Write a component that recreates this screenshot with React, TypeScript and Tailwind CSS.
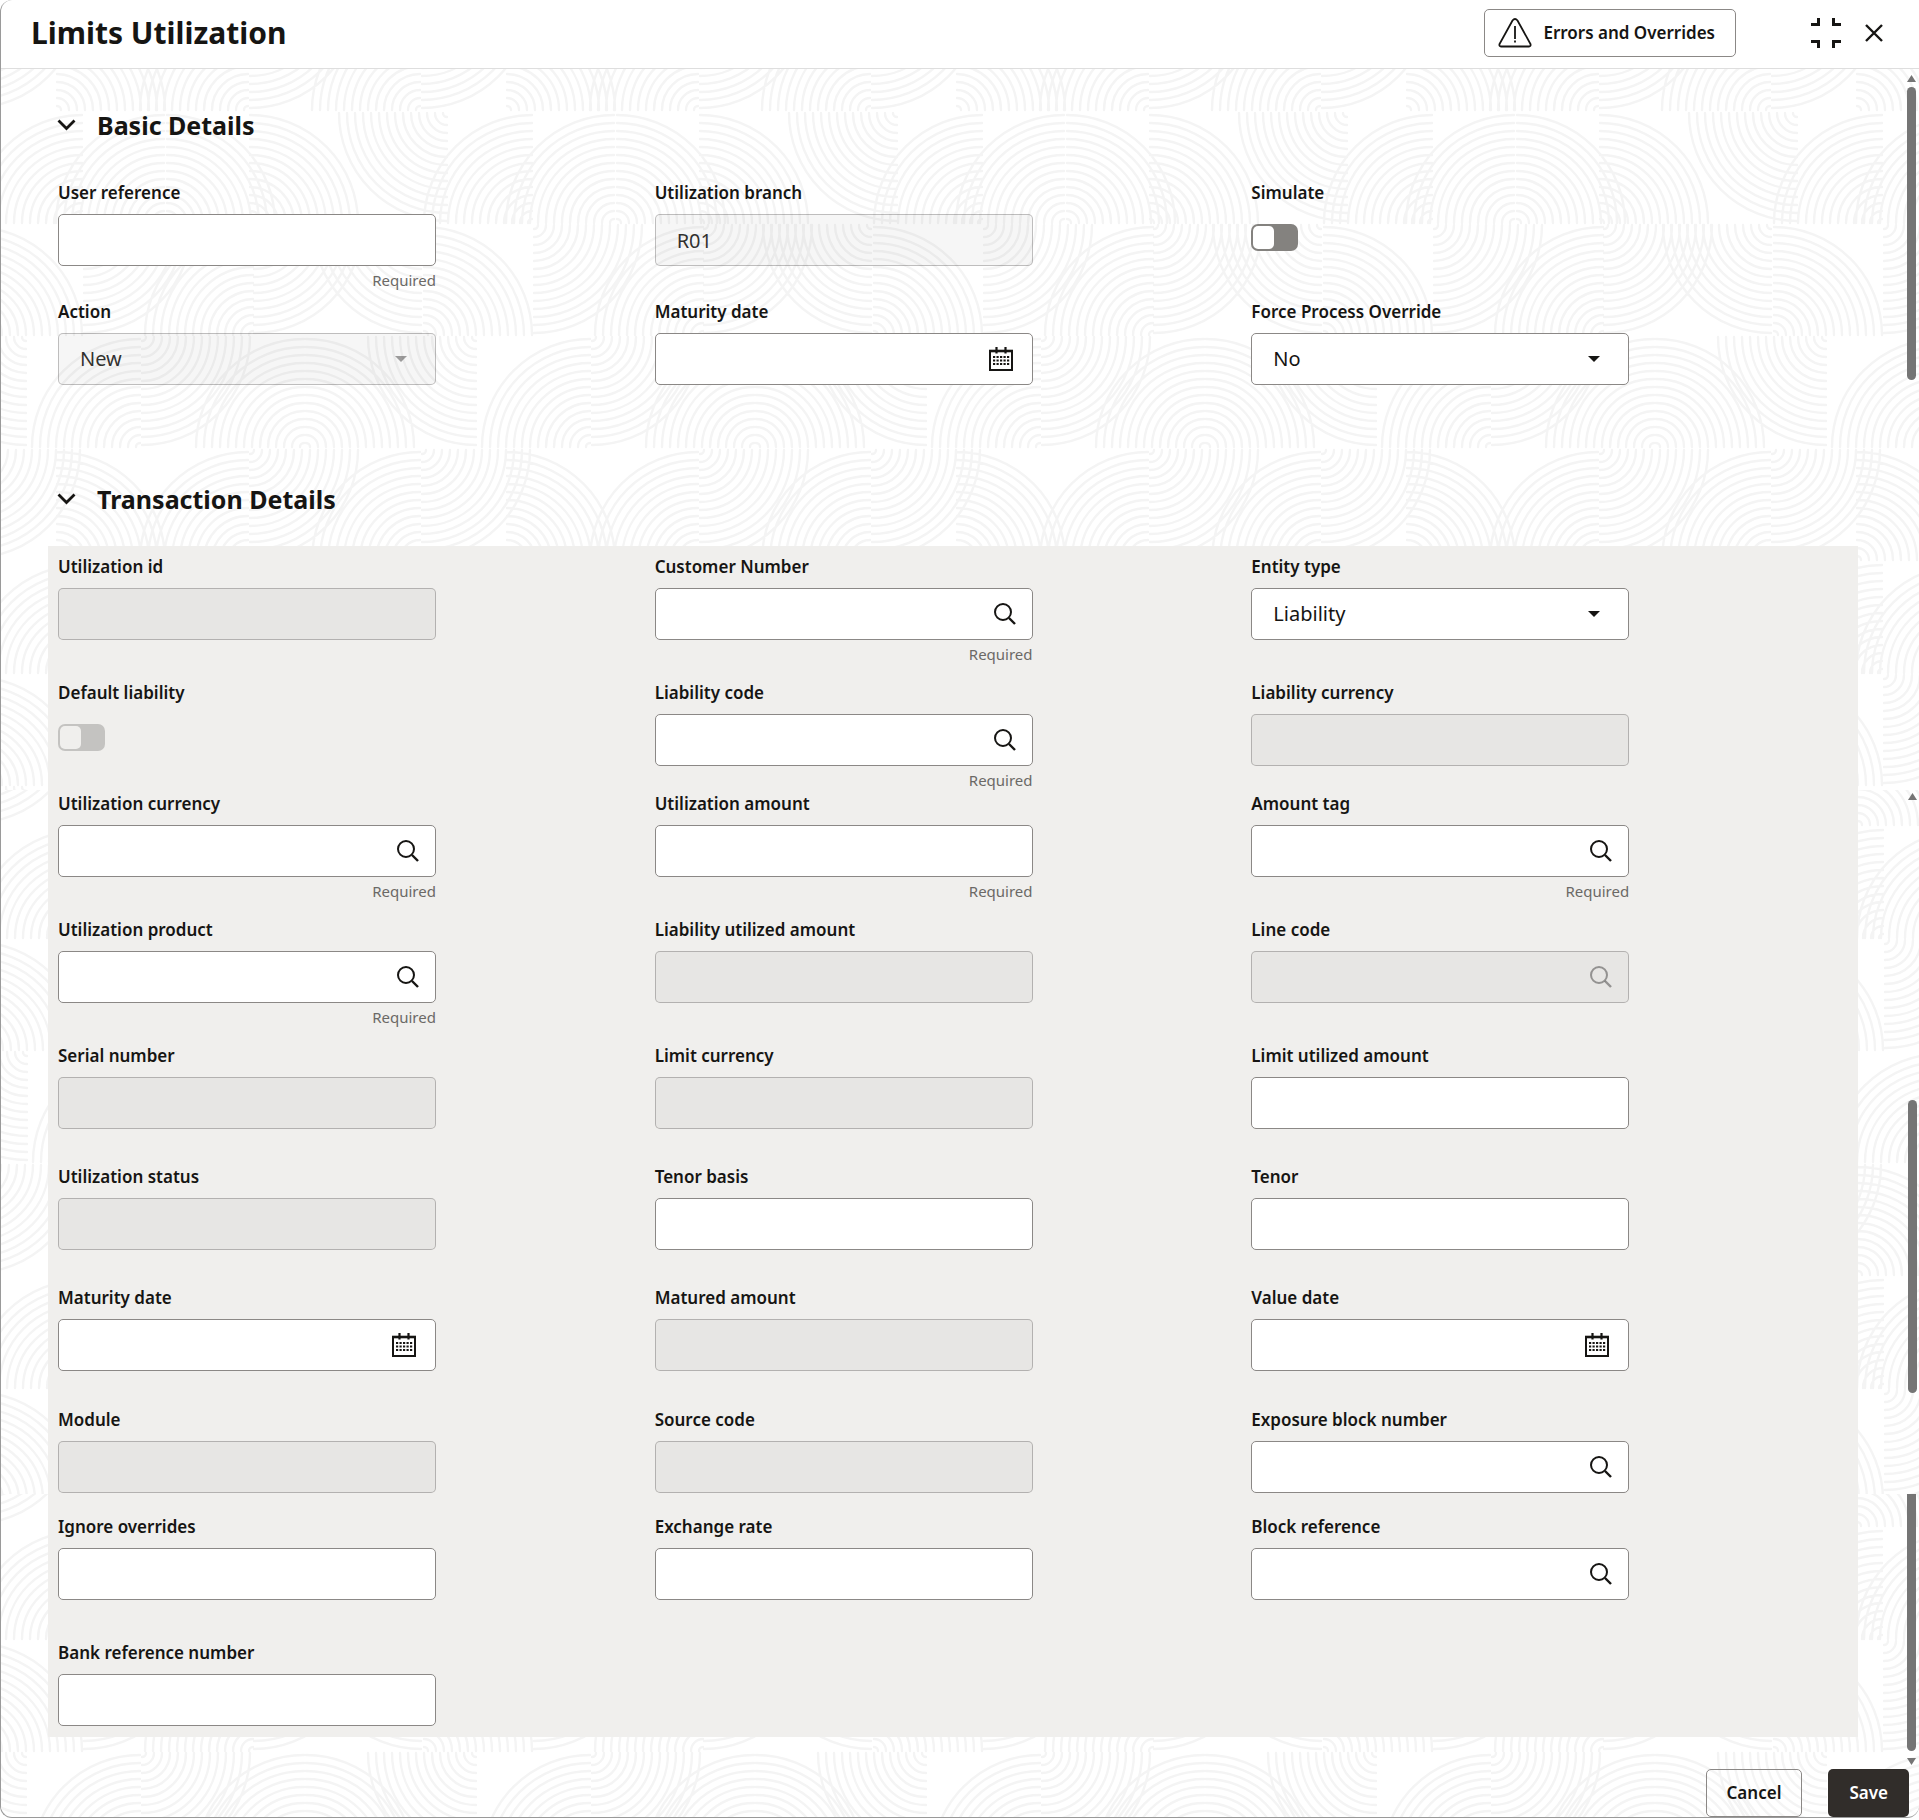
import React, { useId } from "react";

type Corner = "TL" | "TR" | "BL" | "BR";

interface IField {
  label: string;
  kind?: "text" | "search" | "date" | "select" | "switch";
  value?: string;
  required?: boolean;
  disabled?: boolean;
}

interface IRow {
  className: string;
  fields: IField[];
}

// quarter circles of the backdrop tile: centre x, centre y, corner it opens to
const FANS: [number, number, Corner][] = [
  [25, 111, "TL"],
  [107, 111, "TL"],
  [110, 111, "TR"],
  [193, 111, "TR"],
  [390, 1, "BL"],
  [367, 223, "TR"],
  [27, 113, "BR"],
  [196, 223, "TL"],
  [197, 113, "BR"],
  [364, 113, "BL"],
  [419, 225, "BL"],
  [83, 335, "TL"],
  [85, 225, "BR"],
  [247, 335, "TL"],
  [249, 335, "TR"],
  [0, 448, "TR"],
  [365, 338, "BR"],
  [191, 448, "TL"],
  [193, 338, "BR"],
  [363, 448, "TL"],
];

const RADII = Array.from({ length: 14 }, (_, i) => 4 + i * 8);

const fanPath = (cx: number, cy: number, corner: Corner) => {
  const sx = corner === "TL" || corner === "BL" ? -1 : 1;
  const sy = corner === "TL" || corner === "TR" ? -1 : 1;
  const sweep = sx * sy > 0 ? 1 : 0;
  return RADII.map((r) => `M${cx + sx * r} ${cy}A${r} ${r} 0 0 ${sweep} ${cx} ${cy + sy * r}`).join("");
};

const FAN_PATH = FANS.map(([x, y, c]) => fanPath(x, y, c) + fanPath(x - 450, y, c) + fanPath(x + 450, y, c)).join("");

const Backdrop = () => (
  <svg className="absolute inset-0 h-full w-full" aria-hidden="true">
    <defs>
      <g id="fans" fill="none" stroke="#f4f4f4" strokeWidth="2.4" strokeLinecap="round">
        <path d={FAN_PATH} />
      </g>
      <pattern id="top" x="506" y="43" width="450" height="450" patternUnits="userSpaceOnUse">
        <use href="#fans" />
      </pattern>
      <pattern id="middle" x="507" y="308" width="450" height="450" patternUnits="userSpaceOnUse">
        <use href="#fans" />
      </pattern>
      <pattern id="bottom" x="506" y="109" width="450" height="450" patternUnits="userSpaceOnUse">
        <use href="#fans" />
      </pattern>
    </defs>
    <rect width="100%" height="721" fill="url(#top)" />
    <rect y="721" width="100%" height="704" fill="url(#middle)" />
    <rect y="1425" width="100%" height="400" fill="url(#bottom)" />
  </svg>
);

const SearchIcon = () => (
  <svg width="24" height="24" viewBox="0 0 24 24" fill="none" stroke="currentColor" strokeWidth="2">
    <circle cx="10" cy="10" r="8" />
    <path d="M16 16l6 6" strokeWidth="2.4" />
  </svg>
);

const CalendarIcon = () => (
  <svg width="24" height="24" viewBox="0 0 24 24" fill="none" stroke="currentColor">
    <path d="M1 4h22v19H1z" strokeWidth="2" />
    <path d="M0 4h24" strokeWidth="2.6" />
    <path d="M7.500 0v6.500M16.500 0v6.500" strokeWidth="2.2" />
    <path d="M4 10h16.200M4 13.500h16.200M4 17h16.200" strokeWidth="2.2" strokeDasharray="2.2 1.3" />
  </svg>
);

const Caret = () => (
  <svg width="12" height="6" viewBox="0 0 12 6" fill="currentColor">
    <path d="M0 0h12L6 6z" />
  </svg>
);

const Field = ({ label, kind = "text", value, required, disabled }: IField) => {
  const id = useId();
  const box = `h-[52px] w-full rounded-[5px] border px-[21px] text-xl ${
    disabled ? "border-[#161513]/25 bg-[#161513]/4 text-[#161513]/90 opacity-100" : "border-[#8b8886] bg-white"
  }`;
  const iconColor = disabled ? "text-[#161513]/40" : "text-[#161513]";

  return (
    <div className="w-19/30">
      <label htmlFor={id} className="mb-2 block text-[17px] leading-[26px] font-semibold whitespace-nowrap">
        {label}
      </label>
      {kind === "switch" ? (
        <div className="flex h-[52px] pt-[10px]">
          <input
            id={id}
            type="checkbox"
            role="switch"
            disabled={disabled}
            className={`h-[27px] w-[47px] appearance-none rounded-[7px] p-[2px] before:block before:h-[23px] before:w-[21px] before:rounded-[5px] checked:before:ml-[22px] ${
              disabled ? "bg-[#c4c3c1] before:bg-[#f0efed]" : "bg-[#84827f] before:bg-white"
            }`}
          />
        </div>
      ) : (
        <div className="relative">
          {kind === "select" ? (
            <select id={id} disabled={disabled} className={`${box} appearance-none`}>
              <option>{value}</option>
            </select>
          ) : (
            <input id={id} type="text" defaultValue={value} disabled={disabled} className={box} />
          )}
          {kind === "select" && (
            <span className={`pointer-events-none absolute inset-y-0 right-[29px] flex items-center ${iconColor}`}>
              <Caret />
            </span>
          )}
          {kind === "search" && (
            <button
              type="button"
              aria-label={`Search ${label}`}
              disabled={disabled}
              className={`absolute inset-y-0 right-4 flex items-center ${iconColor}`}
            >
              <SearchIcon />
            </button>
          )}
          {kind === "date" && (
            <button
              type="button"
              aria-label={`Pick ${label}`}
              className={`absolute inset-y-0 right-5 flex items-center ${iconColor}`}
            >
              <CalendarIcon />
            </button>
          )}
        </div>
      )}
      {required && <div className="mt-1 text-right text-[15px] leading-5 text-[#6b6966]">Required</div>}
    </div>
  );
};

const Rows = ({ rows }: { rows: IRow[] }) => (
  <>
    {rows.map((row, i) => (
      <div key={i} className={`grid grid-cols-3 ${row.className}`}>
        {row.fields.map((field) => (
          <Field key={field.label} {...field} />
        ))}
      </div>
    ))}
  </>
);

const SectionTitle = ({ children }: { children: React.ReactNode }) => (
  <h2 className="text-[25px] leading-9 font-bold">
    <button type="button" className="flex items-center gap-5 pl-[9px]">
      <svg width="20" height="12" viewBox="0 0 20 12" fill="none" stroke="currentColor" strokeWidth="2.800">
        <path d="M1.500 1.500l8 8 8-8" />
      </svg>
      {children}
    </button>
  </h2>
);

const basicRows: IRow[] = [
  {
    className: "min-h-[119px]",
    fields: [
      { label: "User reference", required: true },
      { label: "Utilization branch", value: "R01", disabled: true },
      { label: "Simulate", kind: "switch" },
    ],
  },
  {
    className: "min-h-[86px]",
    fields: [
      { label: "Action", kind: "select", value: "New", disabled: true },
      { label: "Maturity date", kind: "date" },
      { label: "Force Process Override", kind: "select", value: "No" },
    ],
  },
];

const transactionRows: IRow[] = [
  {
    className: "min-h-[126px]",
    fields: [
      { label: "Utilization id", disabled: true },
      { label: "Customer Number", kind: "search", required: true },
      { label: "Entity type", kind: "select", value: "Liability" },
    ],
  },
  {
    className: "min-h-[111px]",
    fields: [
      { label: "Default liability", kind: "switch", disabled: true },
      { label: "Liability code", kind: "search", required: true },
      { label: "Liability currency", disabled: true },
    ],
  },
  {
    className: "min-h-[126px]",
    fields: [
      { label: "Utilization currency", kind: "search", required: true },
      { label: "Utilization amount", required: true },
      { label: "Amount tag", kind: "search", required: true },
    ],
  },
  {
    className: "min-h-[126px]",
    fields: [
      { label: "Utilization product", kind: "search", required: true },
      { label: "Liability utilized amount", disabled: true },
      { label: "Line code", kind: "search", disabled: true },
    ],
  },
  {
    className: "min-h-[121px]",
    fields: [
      { label: "Serial number", disabled: true },
      { label: "Limit currency", disabled: true },
      { label: "Limit utilized amount" },
    ],
  },
  {
    className: "min-h-[121px]",
    fields: [
      { label: "Utilization status", disabled: true },
      { label: "Tenor basis" },
      { label: "Tenor" },
    ],
  },
  {
    className: "min-h-[122px]",
    fields: [
      { label: "Maturity date", kind: "date" },
      { label: "Matured amount", disabled: true },
      { label: "Value date", kind: "date" },
    ],
  },
  {
    className: "min-h-[107px]",
    fields: [
      { label: "Module", disabled: true },
      { label: "Source code", disabled: true },
      { label: "Exposure block number", kind: "search" },
    ],
  },
  {
    className: "min-h-[126px]",
    fields: [
      { label: "Ignore overrides" },
      { label: "Exchange rate" },
      { label: "Block reference", kind: "search" },
    ],
  },
  {
    className: "min-h-[86px]",
    fields: [{ label: "Bank reference number" }],
  },
];

const Rail = () => (
  <div className="flex w-3 shrink-0 flex-col text-[#757575]" aria-hidden="true">
    <svg className="mt-[6px]" width="9" height="7" viewBox="0 0 9 7" fill="currentColor">
      <path d="M4.500 0L9 7H0z" />
    </svg>
    <div className="mt-[5px] h-[293px] w-[9px] rounded-full bg-current" />
    <svg className="mt-[413px] ml-px" width="9" height="7" viewBox="0 0 9 7" fill="currentColor">
      <path d="M4.500 0L9 7H0z" />
    </svg>
    <div className="mt-[300px] ml-px h-[293px] w-[9px] rounded-full bg-current" />
    <div className="mt-[101px] h-[257px] w-[9px] rounded-b-full bg-current" />
    <svg className="mt-[7px]" width="9" height="7" viewBox="0 0 9 7" fill="currentColor">
      <path d="M0 0h9L4.500 7z" />
    </svg>
  </div>
);

const App = () => {
  return (
    <div className="overflow-hidden rounded-xl border-b border-l border-[#9a9a9a] bg-white font-['Noto_Sans','Open_Sans',sans-serif] text-[#161513]">
      <header className="flex h-[69px] items-center border-b border-[#dedede] pr-9 pb-0.5 pl-[30px]">
        <h1 className="flex-1 text-[30px] leading-10 font-bold">Limits Utilization</h1>
        <button
          type="button"
          className="flex h-12 items-center gap-[11px] rounded-[5px] border border-[#8b8886] pr-5 pl-[13px] text-[17px] font-semibold"
        >
          <svg width="34" height="30" viewBox="0 0 34 30" fill="none" stroke="currentColor" strokeWidth="1.800">
            <path d="M14.500 2.500Q17 -.500 19.500 2.500L32.500 26Q33 28.500 31 28.500H3Q1 28.500 1.500 26Z" />
            <path d="M17 8v13M17 22.500v2" />
          </svg>
          Errors and Overrides
        </button>
        <button type="button" aria-label="Collapse" className="ml-[75px]">
          <svg width="30" height="30" viewBox="0 0 30 30" fill="none" stroke="currentColor" strokeWidth="3">
            <path d="M0 6.500h7.500V0M30 6.500h-7.500V0M0 23.500h7.500V30M30 23.500h-7.500V30" />
          </svg>
        </button>
        <button type="button" aria-label="Close" className="ml-6">
          <svg width="18" height="18" viewBox="0 0 18 18" fill="none" stroke="currentColor" strokeWidth="2.400">
            <path d="M1 1l16 16M17 1L1 17" />
          </svg>
        </button>
      </header>

      <div className="relative">
        <Backdrop />
        <div className="relative flex">
          <main className="flex-1 pr-[49px] pl-[47px]">
            <section className="pt-[38px]">
              <SectionTitle>Basic Details</SectionTitle>
              <div className="px-[10px] pt-[37px]">
                <Rows rows={basicRows} />
              </div>
            </section>
            <section className="pt-24">
              <SectionTitle>Transaction Details</SectionTitle>
              <div className="mt-[29px] bg-[#f0efed] px-[10px] pt-2 pb-[11px]">
                <Rows rows={transactionRows} />
              </div>
            </section>
          </main>
          <Rail />
        </div>
        <footer className="relative flex justify-end gap-[26px] pt-1 pr-[10px]">
          <button
            type="button"
            className="h-12 rounded-[5px] border border-[#8b8886] px-5 text-[17px] font-semibold"
          >
            Cancel
          </button>
          <button
            type="button"
            className="h-12 rounded-[5px] bg-[#312d2a] px-[21px] text-[17px] font-semibold text-white"
          >
            Save
          </button>
        </footer>
      </div>
    </div>
  );
};

export default App;
